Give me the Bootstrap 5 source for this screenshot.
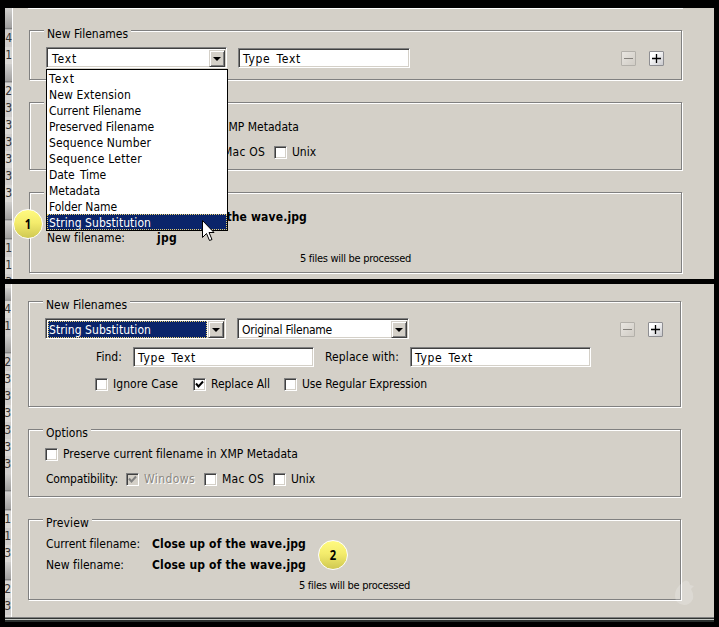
<!DOCTYPE html>
<html lang="en">
<head>
<meta charset="utf-8">
<title>Batch Rename</title>
<link href="https://cdn.jsdelivr.net/npm/bootstrap@5.3.0/dist/css/bootstrap.min.css" rel="stylesheet">
<style>
:root{--face:#d4d0c8;--navy:#0a246a}
body{width:719px;height:627px;overflow:hidden;background:#000;color:#000;padding:8px 5px 0;
  font:12px/16px "DejaVu Sans Condensed","DejaVu Sans",sans-serif;font-stretch:condensed}
[data-w]{display:inline-block;white-space:nowrap}
.wide-gap{word-spacing:2px}
.pane{width:709px;background:var(--face);overflow:hidden}
.pane-a{height:271px}
.pane-b{height:333px;margin-top:5px}
/* sliver of the file list behind the dialog */
.sliver{width:7px;background:#d9d7d4;color:#333;overflow:hidden;flex:none}
.pane-b .sliver{width:6px}
.sliver div{height:17px;line-height:17px;direction:rtl}
.sliver div:nth-child(even){background:#cfcdcb}
.sliver .thumb{height:19px;background:linear-gradient(#d0cfcd,#a2a1a0 88%,#777 94%,#ddd)!important}
.sliver .first{height:22px}
.sliver .cut{height:4px;line-height:0}
.sliver .short{height:13px}
.dialog{border-left:1px solid #fff;padding-left:16px}
.edge{width:655px;height:1px;background:#fff;margin-left:-1px}
.group{width:653px;border:1px solid gray;box-shadow:1px 1px 0 #fff,inset 1px 1px 0 #fff;padding-left:16px;margin-bottom:22px}
.caption{height:16px;margin:-5px 0 0 -2px}
.caption span{background:var(--face);padding:0 3px;display:inline-block}
.field{height:20px;background:#fff;border:1px solid;border-color:gray #fff #fff gray;
  box-shadow:inset 1px 1px 0 #404040,inset -1px -1px 0 var(--face);padding:2px 0 0 4px;flex:none}
.combo{height:21px;padding:2px 1px 2px 2px;display:flex}
.combo .val{flex:1;padding-left:2px;height:17px;line-height:18px}
.combo .val.on{background:var(--navy);color:#fff;outline:1px dotted #e8d070;outline-offset:-1px;margin-right:1px;padding-left:1px}
.arrow{width:16px;height:17px;background:var(--face);border:1px solid;border-color:var(--face) #404040 #404040 var(--face);
  box-shadow:inset 1px 1px 0 #fff,inset -1px -1px 0 gray;display:flex;align-items:center;justify-content:center}
.w181{width:181px}.w172{width:172px}
.tick{width:13px;height:13px;background:#fff;border:1px solid;border-color:gray #fff #fff gray;
  box-shadow:inset 1px 1px 0 #404040,inset -1px -1px 0 var(--face);flex:none;display:flex;align-items:center;justify-content:center}
.tick.off{background:var(--face)}
.dim{color:#8b8882;text-shadow:1px 1px 0 #fff}
.sq{width:15px;height:15px;border:1px solid #8e8e92;border-radius:1px;background:linear-gradient(135deg,#fff 25%,#c9c9cd);display:block;flex:none}
.sq.off{border-color:#b3b0aa;background:linear-gradient(135deg,#e9e6e1,#d0ccc5)}
.sq svg,.tick svg,.arrow svg{display:block}
.line{display:flex;align-items:center;height:16px}
.menu{position:absolute;z-index:2;left:46px;top:69px;width:182px;border:1px solid #000;background:#fff}
.menu div{height:16px;padding-left:2px;line-height:18px}
.menu .on{background:var(--navy);color:#fff;outline:1px dotted #e8d070;outline-offset:-1px}
.ball{position:absolute;z-index:3;width:30px;height:30px;border-radius:50%;border:1px solid #fff;
  background:linear-gradient(#fffa80,#f4ec6c 45%,#cfc852);display:flex;align-items:center;justify-content:center;
  font:bold 14px/1 "Open Sans","Noto Sans",sans-serif}
.ball span{transform:scaleX(.8)}
.ball-1{left:13px;top:209px}.ball-2{left:318px;top:540px}
.pointer{position:absolute;z-index:4;left:201px;top:219px}
.drop{position:absolute;left:674px;top:580px}
.small-note{font-size:11px}
.base{width:709px;height:5px;background:linear-gradient(#808080 0 1px,#303432 1px 2px,#c9ccc8 2px 3px,#2b302e 3px)}
.g1{height:50px}.g2{height:68px}.g3{height:81px}.g4{height:106px}
</style>
</head>
<body class="position-relative">
<main>
<section class="pane pane-a d-flex">
  <div class="sliver">
    <div class="thumb first"></div><div>4</div><div>1</div><div class="thumb"></div><div>2</div><div>3</div><div>3</div><div>3</div><div>3</div><div>3</div><div>3</div><div class="thumb"></div><div class="thumb"></div><div>1</div><div>1</div><div>3</div>
  </div>
  <div class="dialog flex-grow-1">
    <div class="edge"></div>
    <div class="group g1" style="margin-top:21px">
      <div class="caption"><span><b class="fw-normal" data-w="81">New Filenames</b></span></div>
      <div class="d-flex" style="margin-top:5px">
        <div class="field combo w181"><div class="val" style="padding-left:3px"><span data-w="25">Text</span></div><div class="arrow"><svg width="8" height="4"><path d="M0 0h8L4 4z"/></svg></div></div>
        <div class="field w172" style="margin:1px 211px 0 11px"><span class="wide-gap" data-w="58">Type Text</span></div>
        <div class="sq off" style="margin:4px 13px 0 0"><svg width="13" height="13"><path d="M2 6.500h9" stroke="#85827d"/></svg></div>
        <div class="sq" style="margin-top:4px"><svg width="13" height="13"><path d="M2 6.500h9M6.500 2v9" stroke="#000" stroke-width="1.300"/></svg></div>
      </div>
    </div>
    <div class="group g2">
      <div class="caption"><span><b class="fw-normal" data-w="42">Options</b></span></div>
      <div class="line" style="margin-top:5px"><i class="tick"></i><span style="margin-left:5px" data-w="235">Preserve current filename in XMP Metadata</span></div>
      <div class="line" style="margin-top:9px"><span data-w="72" style="margin:0 8px 0 1px">Compatibility:</span><i class="tick off"></i><span class="dim" data-w="51" style="margin:0 9px 0 5px">Windows</span><i class="tick"></i><span data-w="42" style="margin:0 9px 0 5px">Mac OS</span><i class="tick"></i><span data-w="24" style="margin-left:5px">Unix</span></div>
    </div>
    <div class="group g3">
      <div class="caption"><span><b class="fw-normal" data-w="43">Preview</b></span></div>
      <div class="line" style="margin:5px 0 0 1px"><span data-w="94" style="margin-right:12px">Current filename:</span><b data-w="154">Close up of the wave.jpg</b></div>
      <div class="line" style="margin:5px 0 0 1px"><span data-w="78" style="margin-right:32px">New filename:</span><b data-w="20">jpg</b></div>
      <div class="line small-note" style="margin:5px 0 0 254px"><span data-w="111">5 files will be processed</span></div>
    </div>
  </div>
</section>

<section class="pane pane-b d-flex">
  <div class="sliver">
    <div class="cut"></div><div class="thumb short"></div><div>4</div><div>1</div><div class="thumb"></div><div>2</div><div>3</div><div>3</div><div>3</div><div>3</div><div>3</div><div>3</div><div class="thumb"></div><div class="thumb"></div><div>1</div><div>1</div><div>3</div><div class="thumb"></div><div>2</div><div>3</div>
  </div>
  <div class="dialog flex-grow-1">
    <div class="group g4" style="margin-top:17px">
      <div class="caption"><span><b class="fw-normal" data-w="81">New Filenames</b></span></div>
      <div class="d-flex" style="margin-top:5px">
        <div class="field combo w181"><div class="val on"><span data-w="102">String Substitution</span></div><div class="arrow"><svg width="8" height="4"><path d="M0 0h8L4 4z"/></svg></div></div>
        <div class="field combo w172" style="margin:0 211px 0 11px"><div class="val"><span data-w="90">Original Filename</span></div><div class="arrow"><svg width="8" height="4"><path d="M0 0h8L4 4z"/></svg></div></div>
        <div class="sq off" style="margin:4px 13px 0 0"><svg width="13" height="13"><path d="M2 6.500h9" stroke="#85827d"/></svg></div>
        <div class="sq" style="margin-top:4px"><svg width="13" height="13"><path d="M2 6.500h9M6.500 2v9" stroke="#000" stroke-width="1.300"/></svg></div>
      </div>
      <div class="d-flex align-items-center" style="margin:8px 0 0 51px"><span data-w="26" style="margin-right:11px">Find:</span><div class="field w181"><span class="wide-gap" data-w="58">Type Text</span></div><span data-w="74" style="margin:0 11px">Replace with:</span><div class="field w181"><span class="wide-gap" data-w="58">Type Text</span></div></div>
      <div class="line" style="margin:9px 0 0 50px"><i class="tick"></i><span data-w="65" style="margin:0 15px 0 5px">Ignore Case</span><i class="tick"><svg width="9" height="9"><path d="M1 3.500l2.500 3L8 1.500" fill="none" stroke="#000" stroke-width="2"/></svg></i><span data-w="59" style="margin:0 14px 0 5px">Replace All</span><i class="tick"></i><span data-w="125" style="margin-left:5px">Use Regular Expression</span></div>
    </div>
    <div class="group g2">
      <div class="caption"><span><b class="fw-normal" data-w="42">Options</b></span></div>
      <div class="line" style="margin-top:5px"><i class="tick"></i><span style="margin-left:5px" data-w="235">Preserve current filename in XMP Metadata</span></div>
      <div class="line" style="margin-top:9px"><span data-w="72" style="margin:0 8px 0 1px">Compatibility:</span><i class="tick off"><svg width="9" height="9"><path d="M1 3.500l2.500 3L8 1.500" fill="none" stroke="gray" stroke-width="2"/></svg></i><span class="dim" data-w="51" style="margin:0 9px 0 5px">Windows</span><i class="tick"></i><span data-w="42" style="margin:0 9px 0 5px">Mac OS</span><i class="tick"></i><span data-w="24" style="margin-left:5px">Unix</span></div>
    </div>
    <div class="group g3">
      <div class="caption"><span><b class="fw-normal" data-w="43">Preview</b></span></div>
      <div class="line" style="margin:5px 0 0 1px"><span data-w="94" style="margin-right:12px">Current filename:</span><b data-w="154">Close up of the wave.jpg</b></div>
      <div class="line" style="margin:5px 0 0 1px"><span data-w="78" style="margin-right:28px">New filename:</span><b data-w="154">Close up of the wave.jpg</b></div>
      <div class="line small-note" style="margin:5px 0 0 254px"><span data-w="111">5 files will be processed</span></div>
    </div>
  </div>
</section>
<div class="base"></div>
</main>

<div class="menu">
  <div><span data-w="26">Text</span></div><div><span data-w="82">New Extension</span></div><div><span data-w="92">Current Filename</span></div><div><span data-w="105">Preserved Filename</span></div><div><span data-w="102">Sequence Number</span></div><div><span data-w="93">Sequence Letter</span></div><div><span class="wide-gap" data-w="57">Date Time</span></div><div><span data-w="51">Metadata</span></div><div><span data-w="68">Folder Name</span></div><div class="on"><span data-w="102">String Substitution</span></div>
</div>
<div class="ball ball-1"><span>1</span></div>
<div class="ball ball-2"><span>2</span></div>
<svg class="pointer" width="14" height="24"><path d="M1.500 1.500v17l4-4 3 7 2.500-1-3-7h5z" fill="#fff" stroke="#000"/></svg>
<svg class="drop" width="22" height="26"><path d="M1 16C1 8 6 5 9 2q3-3 6 0l1 3 4 1-3 3q3 5 2 10-3 6-9 6Q1 24 1 16z" fill="#fff" opacity=".2"/></svg>
<script src="https://cdn.jsdelivr.net/npm/bootstrap@5.3.0/dist/js/bootstrap.bundle.min.js"></script>
<script>
document.querySelectorAll('[data-w]').forEach(function (el) {
  var w = +el.dataset.w, n = el.textContent.length;
  var gap = (w - el.getBoundingClientRect().width) / n;
  el.style.letterSpacing = gap.toFixed(3) + 'px';
  el.style.width = w + 'px';
});
</script>
</body>
</html>
